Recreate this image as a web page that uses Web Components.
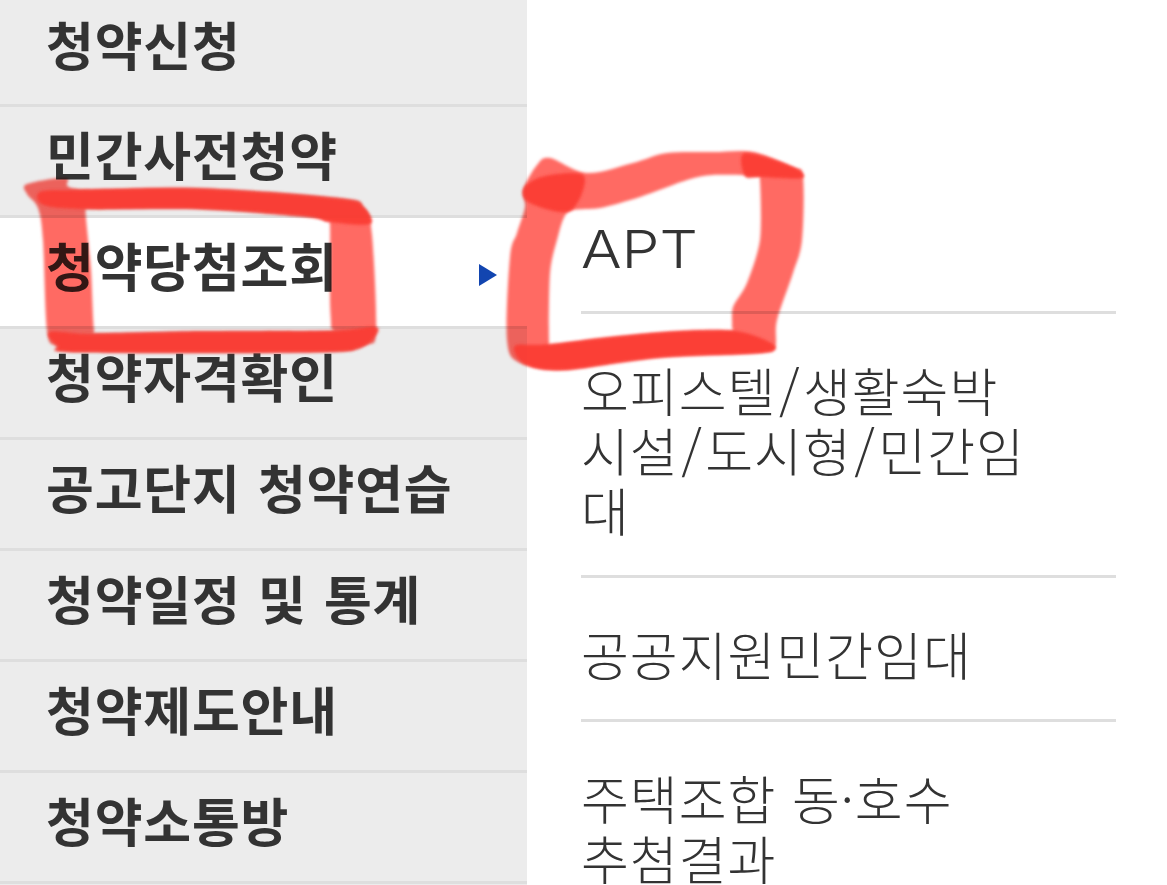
<!DOCTYPE html>
<html lang="ko"><head><meta charset="utf-8"><style>
html,body{margin:0;padding:0;background:#fff;height:885px;overflow:hidden}
.sl{margin:0 2.5px}
</style></head><body>
<app-screen>
<side-item style="--h:104px;--o:-17px">청약신청</side-item>
<side-item>민간사전청약</side-item>
<side-item active>청약당첨조회</side-item>
<side-item>청약자격확인</side-item>
<side-item>공고단지 청약연습</side-item>
<side-item>청약일정 및 통계</side-item>
<side-item>청약제도안내</side-item>
<side-item>청약소통방</side-item>
<sub-item slot="sub"><span style="display:inline-block;font-family:Inter,'Noto Sans CJK KR',sans-serif;transform:scaleX(1.16);transform-origin:0 50%;position:relative;top:4px;letter-spacing:0">APT</span></sub-item>
<sub-item slot="sub">오피스텔<span class="sl">/</span>생활숙박<br>시설<span class="sl">/</span>도시형<span class="sl">/</span>민간임<br>대</sub-item>
<sub-item slot="sub">공공지원민간임대</sub-item>
<sub-item slot="sub">주택조합 동·호수<br>추첨결과</sub-item>
</app-screen>
<script>
function smooth(pts,t){t=t||.16;let n=pts.length,d=`M${pts[0][0]} ${pts[0][1]}`;
for(let i=0;i<n;i++){let p0=pts[(i-1+n)%n],p1=pts[i],p2=pts[(i+1)%n],p3=pts[(i+2)%n];
d+=`C${(p1[0]+(p2[0]-p0[0])*t).toFixed(1)} ${(p1[1]+(p2[1]-p0[1])*t).toFixed(1)} ${(p2[0]-(p3[0]-p1[0])*t).toFixed(1)} ${(p2[1]-(p3[1]-p1[1])*t).toFixed(1)} ${p2[0]} ${p2[1]}`}
return d+'Z'}
const L1=smooth([[27,184],[66,178],[78,189],[200,188],[340,198],[364,207],[372,235],[376,330],[366,345],[320,352],[80,352],[56,346],[47,330],[43,240],[38,208],[27,194]]);
const L2=smooth([[86,209],[92,209],[200,209],[305,217],[326,221],[330,226],[330,300],[331,327],[326,331],[200,331],[100,333],[94,329],[91,270],[86,218]],.12);
const L3=smooth([[40,192],[78,190],[200,189],[340,199],[364,208],[370,224],[330,222],[305,216],[200,209],[85,209],[44,205]]);
const L4=smooth([[50,332],[94,334],[200,332],[330,331],[376,327],[372,340],[358,348],[320,352],[80,352],[58,346]]);
const R1=smooth([[550,158],[587,173],[633,163],[667,153],[713,152],[753,152],[793,167],[803,177],[802,240],[793,273],[777,320],[775,347],[760,353],[667,357],[617,362],[563,370],[520,363],[507,340],[510,257],[517,233],[525,207],[523,190],[537,165]]);
const R2=smooth([[568,212],[600,208],[640,197],[687,180],[713,175],[755,176],[760,181],[760,240],[747,283],[733,307],[732,326],[728,331],[667,332],[600,338],[553,345],[549,340],[550,273],[557,240]],.13);
const R3=smooth([[524,188],[545,176],[584,176],[570,211],[530,203]]);
const R4=smooth([[745,153],[793,167],[802,178],[760,177],[745,176]]);
const R5=smooth([[515,346],[549,344],[667,332],[735,331],[774,345],[760,353],[667,357],[563,370],[525,364]]);
class AppScreen extends HTMLElement{constructor(){super();this.attachShadow({mode:'open'}).innerHTML=`
<style>
:host{display:block;position:relative;width:1167px;height:885px;overflow:hidden;background:#fff}
.wrap{display:grid;grid-template-columns:527px 535px;column-gap:54px;height:885px}
.side{background:#ececec;display:flex;flex-direction:column;height:885px}
.sub{padding-top:166px;display:flex;flex-direction:column}
svg{position:absolute;left:0;top:0;pointer-events:none}
.m{mix-blend-mode:multiply}
.n{opacity:.9}
</style>
<div class="wrap"><div class="side"><slot></slot></div><div class="sub"><slot name="sub"></slot></div></div>
<svg class="m" width="1167" height="885" viewBox="0 0 1167 885" aria-hidden="true">
<defs><filter id="b" x="-5%" y="-5%" width="110%" height="110%"><feGaussianBlur stdDeviation="1.4"/></filter></defs>
<g filter="url(#b)">
<path fill="#ff6a64" fill-rule="evenodd" d="${L1}${L2}"/>
<path fill="#ff6a64" fill-rule="evenodd" d="${R1}${R2}"/>
</g></svg>
<svg class="n" width="1167" height="885" viewBox="0 0 1167 885" aria-hidden="true">
<defs><filter id="c" x="-5%" y="-5%" width="110%" height="110%"><feGaussianBlur stdDeviation="1.6"/></filter></defs>
<g filter="url(#c)" fill="#fb3a30">
<path d="${L3}"/><path d="${L4}"/><path d="${R3}"/><path d="${R4}"/><path d="${R5}"/>
</g></svg>`}}
customElements.define('app-screen',AppScreen);
class SideItem extends HTMLElement{constructor(){super();this.attachShadow({mode:'open'}).innerHTML=`
<style>
:host{display:flex;position:relative;box-sizing:content-box;height:var(--h,108px);flex:none;align-items:center;padding-left:46px;border-bottom:3px solid #dedede;
font:700 52px/1 "Noto Sans CJK KR",sans-serif;color:#333;white-space:pre;letter-spacing:.8px;word-spacing:2px}
:host([active]){background:#fff}
.t{display:block;margin-top:var(--o,-14px)}
.arrow{display:none;position:absolute;left:479px;top:46px;width:0;height:0;border-left:18px solid #1245b0;border-top:11px solid transparent;border-bottom:11px solid transparent}
:host([active]) .arrow{display:block}
</style><span class="t"><slot></slot></span><span class="arrow"></span>`}}
customElements.define('side-item',SideItem);
class SubItem extends HTMLElement{constructor(){super();this.attachShadow({mode:'open'}).innerHTML=`
<style>
:host{display:block;box-sizing:content-box;flex:none;padding:46px 0 35px;border-bottom:3px solid #dedede;
font:300 52px/60px "Noto Sans CJK KR",sans-serif;color:#333;white-space:nowrap;letter-spacing:1px}
</style><slot></slot>`}}
customElements.define('sub-item',SubItem);
</script></body></html>
